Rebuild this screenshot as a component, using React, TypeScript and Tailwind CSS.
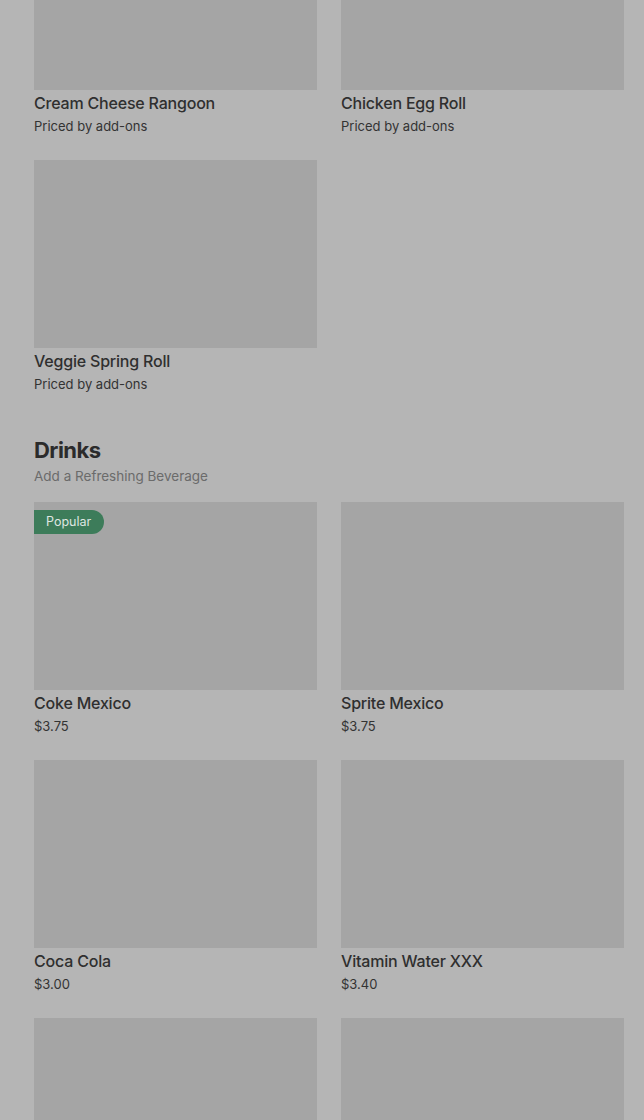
import React from "react"

type Item = { name: string; price: string; popular?: boolean }

const starters: Item[] = [
  { name: "Cream Cheese Rangoon", price: "Priced by add-ons" },
  { name: "Chicken Egg Roll", price: "Priced by add-ons" },
  { name: "Veggie Spring Roll", price: "Priced by add-ons" },
]

const drinks: Item[] = [
  { name: "Coke Mexico", price: "$3.75", popular: true },
  { name: "Sprite Mexico", price: "$3.75" },
  { name: "Coca Cola", price: "$3.00" },
  { name: "Vitamin Water XXX", price: "$3.40" },
  { name: "", price: "" },
  { name: "", price: "" },
]

function Card({ item }: { item: Item }) {
  return (
    <div className="flex flex-col">
      <div className="relative h-[188px] bg-[#a5a5a5]">
        {item.popular && (
          <span className="absolute left-0 top-2 h-6 pl-3 pr-[13px] flex items-center rounded-r-full bg-[#3d7c5a] text-[12.5px] text-[#dfe6e2]">
            Popular
          </span>
        )}
      </div>
      <div className="text-[16px] leading-6 font-medium text-[#2f2f2f] tracking-[-0.2px] mt-px">{item.name}</div>
      <div className="text-[13px] leading-5 pt-px text-[#333]">{item.price}</div>
    </div>
  )
}

export default function App() {
  return (
    <div
      className="min-h-screen bg-[#b5b5b5] overflow-hidden"
      style={{ fontFamily: "Inter, Roboto, 'Liberation Sans', sans-serif" }}
    >
      <div className="pl-[34px] pr-5 -mt-[98px]">
        <div className="grid grid-cols-2 gap-x-6 gap-y-6">
          {starters.map((s, i) => (
            <Card key={i} item={s} />
          ))}
        </div>

        <div className="mt-10">
          <h2 className="text-[22px] leading-8 font-bold text-[#2b2b2b] tracking-tight">Drinks</h2>
          <p className="text-[13.5px] leading-5 text-[#6b6b6b]">Add a Refreshing Beverage</p>
        </div>

        <div className="grid grid-cols-2 gap-x-6 gap-y-6 mt-4">
          {drinks.map((d, i) => (
            <Card key={i} item={d} />
          ))}
        </div>
      </div>
    </div>
  )
}
